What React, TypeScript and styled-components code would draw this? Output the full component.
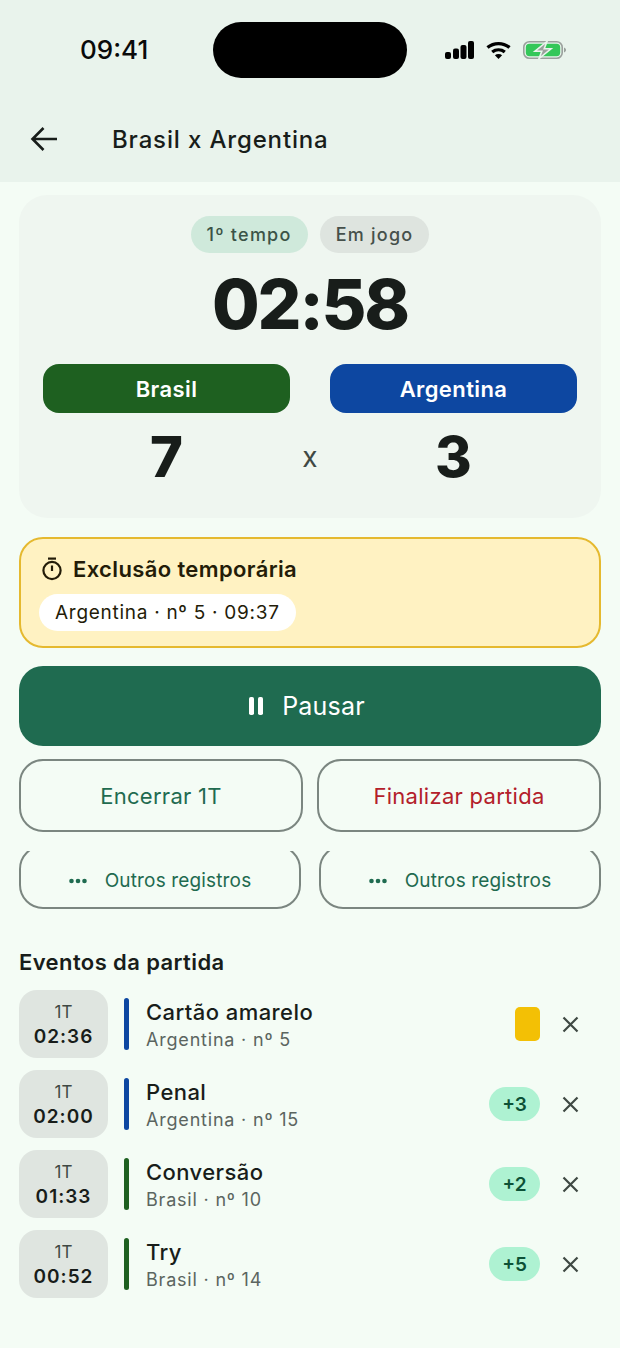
import React from "react";
import styled, { createGlobalStyle } from "styled-components";

const GlobalStyle = createGlobalStyle`
  html, body {
    margin: 0;
    padding: 0;
    background: #f4fcf5;
  }
  body {
    font-family: Inter, "Liberation Sans", sans-serif;
    color: #181d1a;
  }
  * {
    box-sizing: border-box;
  }
`;

const GREEN = "#1f6b50";
const TEAM_GREEN = "#1e6020";
const TEAM_BLUE = "#0d47a1";

const Page = styled.div`
  width: 620px;
  height: 1348px;
  overflow: hidden;
  background: #f4fcf5;
`;

const Header = styled.header`
  height: 182px;
  background: #e9f3ec;
  display: flex;
  flex-direction: column;
`;

const StatusBar = styled.div`
  height: 100px;
  display: flex;
  align-items: flex-start;
  padding: 22px 54px 0 80px;
`;

const Clock = styled.div`
  width: 133px;
  height: 56px;
  line-height: 56px;
  font-size: 26px;
  font-weight: 500;
  color: #0a0a0a;
`;

const Island = styled.div`
  width: 194px;
  height: 56px;
  border-radius: 28px;
  background: #000;
`;

const StatusIcons = styled.div`
  margin-left: 38px;
  height: 56px;
  display: flex;
  align-items: center;
  gap: 12px;
`;

const AppBar = styled.div`
  height: 78px;
  display: flex;
  align-items: center;
  padding: 0 0 0 30px;
`;

const Title = styled.h1`
  margin: 0 0 0 54px;
  font-size: 24px;
  font-weight: 500;
  letter-spacing: 0.85px;
  color: #181d1a;
`;

const Main = styled.main`
  padding: 13px 19px 0;
  display: flex;
  flex-direction: column;
`;

const ScoreCard = styled.section`
  height: 323px;
  border-radius: 28px;
  background: #eff6f0;
  padding: 21px 24px 0;
  display: flex;
  flex-direction: column;
  align-items: stretch;
`;

const ChipRow = styled.div`
  display: flex;
  justify-content: center;
  gap: 12px;
`;

const Chip = styled.span<{ $tone: "green" | "grey" }>`
  height: 37px;
  padding: 0 16px;
  border-radius: 19px;
  display: flex;
  align-items: center;
  font-size: 18px;
  font-weight: 500;
  letter-spacing: 1.25px;
  color: ${({ $tone }) => ($tone === "green" ? "#3b5347" : "#46504b")};
  background: ${({ $tone }) => ($tone === "green" ? "#cfe9db" : "#dee4df")};
`;

const Timer = styled.div`
  margin-top: 4px;
  height: 95px;
  line-height: 95px;
  text-align: center;
  font-size: 69px;
  font-weight: 800;
  letter-spacing: -2.2px;
  color: #181d1a;
`;

const TeamGrid = styled.div`
  margin-top: 12px;
  display: grid;
  grid-template-columns: 247px 1fr 247px;
  grid-template-rows: 49px auto;
  align-items: center;
`;

const TeamPill = styled.div<{ $color: string }>`
  height: 49px;
  border-radius: 16px;
  background: ${({ $color }) => $color};
  color: #fff;
  display: flex;
  align-items: center;
  justify-content: center;
  font-size: 22px;
  font-weight: 600;
  letter-spacing: 0.4px;
`;

const Score = styled.div`
  height: 88px;
  line-height: 88px;
  text-align: center;
  font-size: 56px;
  font-weight: 800;
  color: #181d1a;
`;

const Versus = styled.div`
  height: 88px;
  line-height: 88px;
  text-align: center;
  font-size: 28px;
  color: #3f4944;
`;

const Banner = styled.section`
  margin-top: 19px;
  height: 111px;
  border: 2px solid #e5b92f;
  border-radius: 24px;
  background: #fff2c2;
  padding: 14px 18px 0;
  display: flex;
  flex-direction: column;
  align-items: flex-start;
`;

const BannerTitle = styled.div`
  display: flex;
  align-items: center;
  gap: 10px;
  padding-left: 2px;
  height: 32px;
  font-size: 22px;
  font-weight: 600;
  letter-spacing: 0.37px;
  color: #231c08;
`;

const BannerTag = styled.div`
  margin-top: 9px;
  height: 37px;
  padding: 0 16px;
  border-radius: 19px;
  background: #fff;
  display: flex;
  align-items: center;
  font-size: 19px;
  letter-spacing: 0.72px;
  color: #231c08;
`;

const PauseButton = styled.button`
  margin-top: 18px;
  height: 80px;
  border: 0;
  border-radius: 24px;
  background: ${GREEN};
  color: #fff;
  display: flex;
  align-items: center;
  justify-content: center;
  gap: 19px;
  padding: 0 6px 0 0;
  font-family: inherit;
  font-size: 25px;
  letter-spacing: 0.2px;
`;

const ActionRow = styled.div`
  margin-top: 13px;
  display: grid;
  grid-template-columns: 284px 284px;
  justify-content: space-between;
`;

const ActionButton = styled.button<{ $danger?: boolean }>`
  height: 73px;
  border: 2px solid #7b8680;
  border-radius: 24px;
  background: transparent;
  font-family: inherit;
  font-size: 22px;
  letter-spacing: 0.28px;
  color: ${({ $danger }) => ($danger ? "#b3202a" : GREEN)};
`;

const RecordRow = styled.div`
  margin-top: 19px;
  display: grid;
  grid-template-columns: 282px 282px;
  justify-content: space-between;
`;

const RecordClip = styled.div`
  height: 58px;
  overflow: hidden;
  display: flex;
  flex-direction: column;
  justify-content: flex-end;
`;

const RecordButton = styled.button`
  flex: none;
  height: 64px;
  border: 2px solid #7b8680;
  border-radius: 24px;
  background: transparent;
  color: ${GREEN};
  display: flex;
  align-items: center;
  justify-content: center;
  gap: 18px;
  padding-top: 8px;
  font-family: inherit;
  font-size: 19px;
  letter-spacing: 0.15px;
`;

const SectionTitle = styled.h2`
  margin: 38px 0 0;
  height: 30px;
  line-height: 30px;
  font-size: 22px;
  font-weight: 600;
  letter-spacing: 0.4px;
  color: #181d1a;
`;

const EventList = styled.ul`
  list-style: none;
  margin: 13px 0 0;
  padding: 0;
  display: flex;
  flex-direction: column;
  gap: 12px;
`;

const EventRow = styled.li`
  height: 68px;
  display: flex;
  align-items: center;
`;

const TimeBox = styled.div`
  width: 89px;
  height: 68px;
  border-radius: 18px;
  background: #dfe5e0;
  display: flex;
  flex-direction: column;
  align-items: center;
  justify-content: center;
`;

const TimePeriod = styled.span`
  font-size: 17px;
  line-height: 24px;
  color: #3f4944;
`;

const TimeValue = styled.span`
  font-size: 19px;
  line-height: 25px;
  font-weight: 600;
  letter-spacing: 1px;
  color: #181d1a;
`;

const TeamBar = styled.div<{ $color: string }>`
  margin-left: 16px;
  width: 5px;
  height: 52px;
  border-radius: 3px;
  background: ${({ $color }) => $color};
`;

const EventText = styled.div`
  margin-left: 17px;
  flex: 1;
  display: flex;
  flex-direction: column;
  padding-top: 2px;
`;

const EventTitle = styled.span`
  font-size: 22px;
  line-height: 29px;
  font-weight: 500;
  letter-spacing: 0.43px;
  color: #181d1a;
`;

const EventSub = styled.span`
  font-size: 18px;
  line-height: 26px;
  letter-spacing: 0.8px;
  color: #5b6560;
`;

const YellowCard = styled.div`
  width: 25px;
  height: 34px;
  border-radius: 5px;
  background: #f3c005;
`;

const Points = styled.div`
  width: 51px;
  height: 34px;
  border-radius: 17px;
  background: #aef2d2;
  color: #0c5136;
  display: flex;
  align-items: center;
  justify-content: center;
  font-size: 19px;
  font-weight: 600;
`;

const RemoveButton = styled.button`
  margin-left: 20px;
  margin-right: 20px;
  width: 21px;
  height: 21px;
  padding: 0;
  border: 0;
  background: none;
  display: flex;
  color: #3f4944;
`;

const BackIcon = () => (
  <svg width="28" height="26" viewBox="0 0 28 26" fill="none" stroke="#181d1a" strokeWidth="2.6">
    <path d="M27 13H3M13.5 2 2.5 13l11 11" />
  </svg>
);

const SignalIcon = () => (
  <svg width="29" height="18" viewBox="0 0 29 18" fill="#000">
    <rect x="0" y="11" width="6" height="7" rx="2" />
    <rect x="8" y="7.5" width="6" height="10.5" rx="2" />
    <rect x="15.5" y="4" width="6" height="14" rx="2" />
    <rect x="23" y="0" width="6" height="18" rx="2" />
  </svg>
);

const WifiIcon = () => (
  <svg width="25" height="18" viewBox="0 0 25 18" fill="none" stroke="#000" strokeWidth="3.4">
    <path d="M1.5 6.5c6.3-5.2 15.7-5.2 22 0" />
    <path d="M6.2 11c3.7-2.8 8.9-2.8 12.6 0" />
    <path d="M12.5 18l-3.6-3.8c2-1.5 5.2-1.5 7.2 0z" fill="#000" stroke="none" />
  </svg>
);

const BatteryIcon = () => (
  <svg width="43" height="18" viewBox="0 0 43 18">
    <rect x="0.8" y="0.8" width="38.4" height="16.4" rx="5.5" fill="none" stroke="#9aa09c" strokeWidth="1.6" />
    <rect x="2.8" y="2.8" width="34.4" height="12.4" rx="3.6" fill="#34c759" />
    <path d="M41 6.5c1.2.4 2 1.4 2 2.5s-.8 2.1-2 2.5z" fill="#9aa09c" />
    <path d="M24 0.5 12 10.2h6.8L16 17.5 28 7.8h-6.8z" fill="#9aa09c" stroke="#e9f3ec" strokeWidth="1.6" />
  </svg>
);

const StopwatchIcon = () => (
  <svg width="22" height="24" viewBox="0 0 22 24" fill="none" stroke="#231c08" strokeWidth="2.2">
    <path d="M7 1.6h8" />
    <circle cx="11" cy="13.5" r="8.6" />
    <path d="M11 8.5v5.5" />
  </svg>
);

const PauseIcon = () => (
  <svg width="14" height="18" viewBox="0 0 14 18" fill="#fff">
    <rect x="0" y="0" width="5" height="18" rx="1.8" />
    <rect x="9" y="0" width="5" height="18" rx="1.8" />
  </svg>
);

const DotsIcon = () => (
  <svg width="18" height="6" viewBox="0 0 18 6" fill={GREEN}>
    <circle cx="2.5" cy="3" r="2.3" />
    <circle cx="9" cy="3" r="2.3" />
    <circle cx="15.5" cy="3" r="2.3" />
  </svg>
);

const CloseIcon = () => (
  <svg width="21" height="21" viewBox="0 0 21 21" fill="none" stroke="currentColor" strokeWidth="2.2">
    <path d="M3.5 3.5l14 14M17.5 3.5l-14 14" />
  </svg>
);

type MatchEvent = {
  time: string;
  title: string;
  sub: string;
  color: string;
  points?: string;
};

const EVENTS: MatchEvent[] = [
  { time: "02:36", title: "Cartão amarelo", sub: "Argentina · nº 5", color: TEAM_BLUE },
  { time: "02:00", title: "Penal", sub: "Argentina · nº 15", color: TEAM_BLUE, points: "+3" },
  { time: "01:33", title: "Conversão", sub: "Brasil · nº 10", color: TEAM_GREEN, points: "+2" },
  { time: "00:52", title: "Try", sub: "Brasil · nº 14", color: TEAM_GREEN, points: "+5" },
];

function App() {
  return (
    <Page>
      <GlobalStyle />
      <Header>
        <StatusBar>
          <Clock>09:41</Clock>
          <Island />
          <StatusIcons>
            <SignalIcon />
            <WifiIcon />
            <BatteryIcon />
          </StatusIcons>
        </StatusBar>
        <AppBar>
          <BackIcon />
          <Title>Brasil x Argentina</Title>
        </AppBar>
      </Header>
      <Main>
        <ScoreCard>
          <ChipRow>
            <Chip $tone="green">1º tempo</Chip>
            <Chip $tone="grey">Em jogo</Chip>
          </ChipRow>
          <Timer>02:58</Timer>
          <TeamGrid>
            <TeamPill $color={TEAM_GREEN}>Brasil</TeamPill>
            <span />
            <TeamPill $color={TEAM_BLUE}>Argentina</TeamPill>
            <Score>7</Score>
            <Versus>x</Versus>
            <Score>3</Score>
          </TeamGrid>
        </ScoreCard>
        <Banner>
          <BannerTitle>
            <StopwatchIcon />
            Exclusão temporária
          </BannerTitle>
          <BannerTag>Argentina · nº 5 · 09:37</BannerTag>
        </Banner>
        <PauseButton>
          <PauseIcon />
          Pausar
        </PauseButton>
        <ActionRow>
          <ActionButton>Encerrar 1T</ActionButton>
          <ActionButton $danger>Finalizar partida</ActionButton>
        </ActionRow>
        <RecordRow>
          <RecordClip>
            <RecordButton>
              <DotsIcon />
              Outros registros
            </RecordButton>
          </RecordClip>
          <RecordClip>
            <RecordButton>
              <DotsIcon />
              Outros registros
            </RecordButton>
          </RecordClip>
        </RecordRow>
        <SectionTitle>Eventos da partida</SectionTitle>
        <EventList>
          {EVENTS.map((ev) => (
            <EventRow key={ev.time}>
              <TimeBox>
                <TimePeriod>1T</TimePeriod>
                <TimeValue>{ev.time}</TimeValue>
              </TimeBox>
              <TeamBar $color={ev.color} />
              <EventText>
                <EventTitle>{ev.title}</EventTitle>
                <EventSub>{ev.sub}</EventSub>
              </EventText>
              {ev.points ? <Points>{ev.points}</Points> : <YellowCard />}
              <RemoveButton>
                <CloseIcon />
              </RemoveButton>
            </EventRow>
          ))}
        </EventList>
      </Main>
    </Page>
  );
}

export default App;
